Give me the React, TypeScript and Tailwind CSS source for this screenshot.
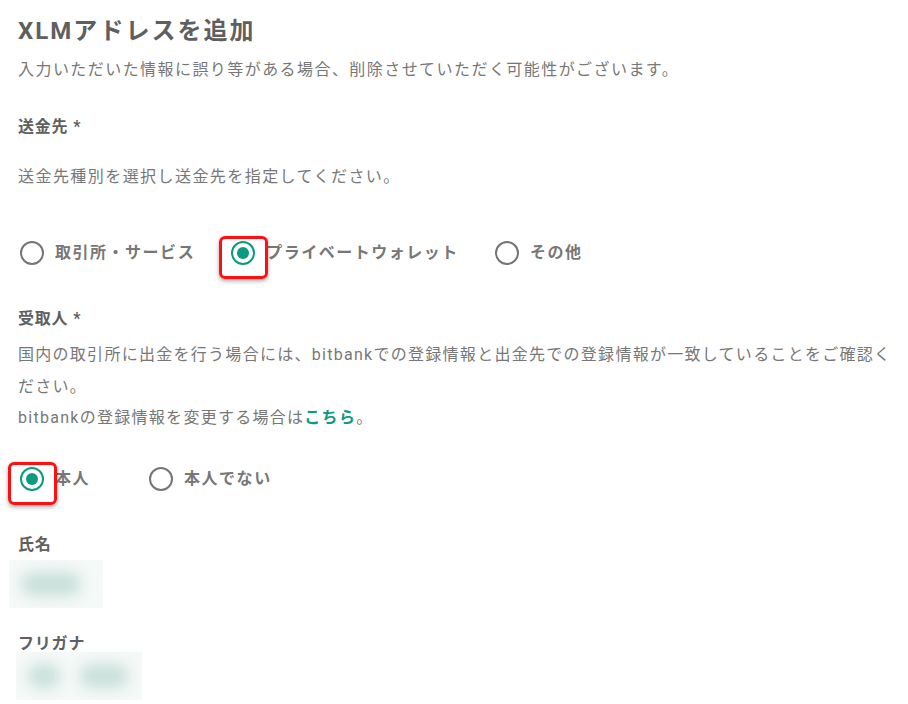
import React, { useState } from "react";

const font = "font-['Roboto','Noto_Sans_CJK_JP',sans-serif]";

type RadioProps = {
  label: string;
  checked: boolean;
  highlight?: boolean;
  className?: string;
  onClick: () => void;
};

const Radio: React.FC<RadioProps> = ({ label, checked, highlight, className, onClick }) => {
  return (
    <button
      type="button"
      onClick={onClick}
      className={`relative flex flex-row items-center gap-[11px] cursor-pointer ${className ?? ""}`}
    >
      <span
        className={`flex items-center justify-center w-6 h-6 rounded-full border-2 ${
          checked ? "border-[#0e9a82]" : "border-[#757575]"
        }`}
      >
        {checked && <span className="w-3 h-3 rounded-full bg-[#0e9a82]" />}
      </span>
      <span className="text-[16px] leading-6 font-bold text-[#777] tracking-[0.095em]">{label}</span>
      {highlight && (
        <span className="absolute left-[-12px] top-[-5px] w-[49px] h-[43px] rounded-[6px] border-[3px] border-[#ff1010] shadow-[0_2px_4px_rgba(0,0,0,0.35)]" />
      )}
    </button>
  );
};

const Blurred: React.FC<{ className?: string; blobs: string[] }> = ({ className, blobs }) => (
  <div className={`relative overflow-hidden bg-[#f5f9f8] ${className ?? ""}`}>
    <div className="flex flex-row items-center h-full gap-5 px-3 blur-[7px]">
      {blobs.map((w, i) => (
        <div key={i} className={`${w} h-6 rounded-full bg-[#c9e0da]`} />
      ))}
    </div>
  </div>
);

const App: React.FC = () => {
  const [dest, setDest] = useState<string>("private");
  const [recipient, setRecipient] = useState<string>("self");

  return (
    <div className={`${font} bg-white min-h-[704px] w-[908px] pl-[18px] pr-[6px] overflow-hidden`}>
      <h1 className="pt-[15px] text-[24px] leading-8 font-bold text-[#5f5f5f] tracking-[0.085em]">
        XLMアドレスを追加
      </h1>
      <p className="mt-[11px] text-[16px] leading-6 text-[#777] tracking-[0.09em]">
        入力いただいた情報に誤り等がある場合、削除させていただく可能性がございます。
      </p>

      <div className="mt-[33px] text-[16px] leading-6 font-bold text-[#5f5f5f] tracking-[0.05em]">
        送金先 *
      </div>
      <p className="mt-[26px] text-[16px] leading-6 text-[#777] tracking-[0.09em]">
        送金先種別を選択し送金先を指定してください。
      </p>

      <div className="mt-[52px] flex flex-row items-center">
        <Radio
          label="取引所・サービス"
          checked={dest === "exchange"}
          onClick={() => setDest("exchange")}
          className="ml-[2px]"
        />
        <Radio
          label="プライベートウォレット"
          checked={dest === "private"}
          highlight
          onClick={() => setDest("private")}
          className="ml-[36px]"
        />
        <Radio
          label="その他"
          checked={dest === "other"}
          onClick={() => setDest("other")}
          className="ml-[36px]"
        />
      </div>

      <div className="mt-[42px] text-[16px] leading-6 font-bold text-[#5f5f5f] tracking-[0.05em]">
        受取人 *
      </div>
      <p className="mt-[8px] text-[16px] leading-[31.5px] text-[#777] tracking-[0.08em]">
        国内の取引所に出金を行う場合には、bitbankでの登録情報と出金先での登録情報が一致していることをご確認ください。
      </p>
      <p className="text-[16px] leading-[31.5px] text-[#777] tracking-[0.08em]">
        bitbankの登録情報を変更する場合は<b className="text-[#0e9a82]">こちら</b>。
      </p>

      <div className="mt-[33px] flex flex-row items-center">
        <Radio
          label="本人"
          checked={recipient === "self"}
          highlight
          onClick={() => setRecipient("self")}
          className="ml-[2px]"
        />
        <Radio
          label="本人でない"
          checked={recipient === "other"}
          onClick={() => setRecipient("other")}
          className="ml-[59px]"
        />
      </div>

      <div className="mt-[42px] text-[16px] leading-6 font-bold text-[#5f5f5f] tracking-[0.05em]">
        氏名
      </div>
      <Blurred className="mt-[3px] ml-[-9px] w-[94px] h-12" blobs={["w-[60px]"]} />

      <div className="mt-[24px] text-[16px] leading-6 font-bold text-[#5f5f5f] tracking-[0.05em]">
        フリガナ
      </div>
      <Blurred className="mt-[-4px] ml-[-2px] w-[126px] h-12" blobs={["w-8", "w-12"]} />
    </div>
  );
};

export default App;
